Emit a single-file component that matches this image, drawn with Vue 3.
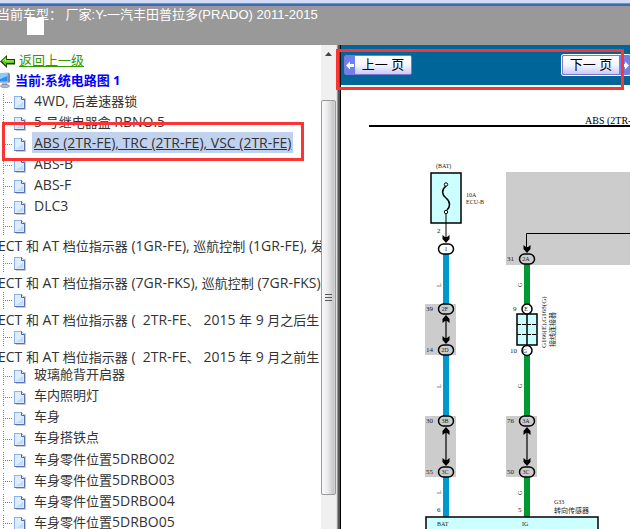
<script setup>
const entries = [
  { text: '4WD, 后差速器锁' },
  { text: '5 号继电器盒 RBNO.5' },
  { text: 'ABS (2TR-FE), TRC (2TR-FE), VSC (2TR-FE)', active: true },
  { text: 'ABS-B' },
  { text: 'ABS-F' },
  { text: 'DLC3' },
  { text: 'ECT 和 AT 档位指示器 (1GR-FE), 巡航控制 (1GR-FE), 发', long: true },
  { text: 'ECT 和 AT 档位指示器 (7GR-FKS), 巡航控制 (7GR-FKS)', long: true },
  { text: 'ECT 和 AT 档位指示器 (\u00a0 2TR-FE、 2015 年 9 月之后生', long: true },
  { text: 'ECT 和 AT 档位指示器 (\u00a0 2TR-FE、 2015 年 9 月之前生', long: true },
  { text: '玻璃舱背开启器' },
  { text: '车内照明灯' },
  { text: '车身' },
  { text: '车身搭铁点' },
  { text: '车身零件位置5DRBO02' },
  { text: '车身零件位置5DRBO03' },
  { text: '车身零件位置5DRBO04' },
  { text: '车身零件位置5DRBO05' }
]

// Latin runs are set one size larger than the Chinese around them
const han = /[\u3001\u4e00-\u9fff]/
const items = entries.map((entry) => ({
  ...entry,
  runs: entry.text
    .split(/([\u3001\u4e00-\u9fff]+)/)
    .filter(Boolean)
    .map((text) => ({ text, latin: !han.test(text) }))
}))

const wires = [
  { x: 443, y: 254, h: 52, color: '#0099cc' },
  { x: 443, y: 354, h: 63, color: '#0099cc' },
  { x: 443, y: 476, h: 41, color: '#0099cc' },
  { x: 524, y: 264, h: 41, color: '#009933' },
  { x: 524, y: 355, h: 62, color: '#009933' },
  { x: 524, y: 476, h: 41, color: '#009933' }
]

const shades = [
  { x: 425, y: 304, w: 31, h: 51 },
  { x: 425, y: 416, w: 31, h: 61 },
  { x: 506, y: 416, w: 31, h: 61 },
  { x: 506, y: 172, w: 200, h: 93 }
]

const terminals = [
  { x: 446, y: 249, name: '1', pin: '', fill: '#fff' },
  { x: 446, y: 309, name: '2F', pin: '39', fill: '#ccc' },
  { x: 446, y: 350, name: '2D', pin: '14', fill: '#ccc' },
  { x: 446, y: 421, name: '3B', pin: '30', fill: '#ccc' },
  { x: 446, y: 472, name: '3C', pin: '55', fill: '#ccc' },
  { x: 527, y: 259, name: '2A', pin: '31', fill: '#ccc' },
  { x: 527, y: 421, name: '3A', pin: '76', fill: '#ccc' },
  { x: 527, y: 472, name: '3C', pin: '50', fill: '#ccc' }
]

const downArrows = [
  { x: 446, y: 243 },
  { x: 527, y: 253 },
  { x: 446, y: 344 },
  { x: 446, y: 466 },
  { x: 527, y: 466 }
]

const upArrows = [
  { x: 446, y: 315 },
  { x: 446, y: 427 },
  { x: 527, y: 427 }
]

const wireLabels = [
  { x: 441, y: 287, name: 'L' },
  { x: 441, y: 388, name: 'L' },
  { x: 441, y: 494, name: 'L' },
  { x: 522, y: 287, name: 'G' },
  { x: 522, y: 388, name: 'G' },
  { x: 522, y: 495, name: 'G' }
]
</script>

<template>
  <div class="page">
    <header class="top">
      <p class="model">当前车型： 厂家:Y-一汽丰田普拉多(PRADO) 2011-2015</p>
      <span class="patch"></span>
    </header>

    <div class="body">
      <aside class="side">
        <nav class="tree">
          <a class="back" href="#">
            <svg width="15" height="13" viewBox="0 0 15 13" aria-hidden="true">
              <path d="M0 6.500L7 0V4H15V9.500H7V13Z" fill="#173f05" />
              <path d="M1.500 6L6.200 1.700V5H14V8H6.200V10.800Z" fill="#58c81b" />
              <path d="M3 6L5.500 3.800V6H13.500" fill="none" stroke="#b9ee67" stroke-width="1" />
            </svg>
            <span>返回上一级</span>
          </a>
          <div class="current">
            <svg width="11" height="16" viewBox="0 0 11 16" aria-hidden="true">
              <path d="M-2 1L8 .5L10 2V10L7 11.500L-2 11Z" fill="#b4bed6" />
              <path d="M8 .5L10 2V10L8 11Z" fill="#7f8cb0" />
              <path d="M-2 2H7.500V9.500H-2Z" fill="#2f8fe6" />
              <path d="M-2 2H7.500V4L-2 8Z" fill="#86cbfa" />
              <path d="M2 11.500H7V13H2Z" fill="#8088b4" />
              <ellipse cx="5" cy="14" rx="4.500" ry="1.700" fill="#b3b6d2" stroke="#7c80a8" stroke-width=".6" />
            </svg>
            <span>当前:系统电路图 1</span>
          </div>
          <ul class="list">
            <li v-for="(item, i) in items" :key="i" :class="['node', { long: item.long, active: item.active }]">
              <svg class="branch" width="28" height="18" viewBox="0 0 28 18" aria-hidden="true">
                <path d="M3.500 0V18M5 8.500H13" fill="none" stroke="#808080" stroke-dasharray="1 1" />
                <path d="M16 4H26V16H16Z" fill="#a9a9b5" opacity=".6" />
                <path d="M14.500 2.500H21.500L24.500 5.500V14.500H14.500Z" fill="#dcedff" stroke="#5c6fae" />
                <path d="M14.500 14V2.500H21" fill="none" stroke="#8fb2e8" />
                <path d="M21.500 2.500V5.500H24.500" fill="#fff" stroke="#5365a0" />
                <path d="M16 13L23 8V13Z" fill="#bddcff" />
              </svg>
              <a class="label" href="#"><span v-for="(run, r) in item.runs" :key="r" :class="{ latin: run.latin }">{{ run.text }}</span></a>
            </li>
          </ul>
        </nav>
        <div class="scroll" aria-hidden="true">
          <div class="up"><svg width="7" height="4" viewBox="0 0 7 4"><path d="M3.500 0L7 4H0Z" fill="#444" /></svg></div>
          <div class="thumb"><i></i><i></i><i></i></div>
        </div>
        <div class="divider"></div>
        <span class="mark mark-item"></span>
      </aside>

      <main class="view">
        <div class="bar">
          <button class="pager prev" type="button">
            <span class="tip"><svg width="9" height="9" viewBox="0 0 9 9" aria-hidden="true"><path d="M0 4.500L4 .5V3H8V6H4V8.500Z" fill="#fff" /></svg></span>
            <span class="word">上一 页</span>
          </button>
          <button class="pager next" type="button">
            <span class="word">下一 页</span>
            <span class="tip"><svg width="9" height="9" viewBox="0 0 9 9" aria-hidden="true"><path d="M9 4.500L5 .5V3H1V6H5V8.500Z" fill="#fff" /></svg></span>
          </button>
        </div>
        <span class="mark mark-pager"></span>

        <svg class="diagram" width="289" height="444" viewBox="341 85 289 444" role="img" aria-label="ABS (2TR-FE)">
          <rect v-for="(s, i) in shades" :key="'s' + i" :x="s.x" :y="s.y" :width="s.w" :height="s.h" fill="#ccc" />
          <rect v-for="(w, i) in wires" :key="'w' + i" :x="w.x" :y="w.y" width="6" :height="w.h" :fill="w.color" />

          <text class="title" x="585" y="124">ABS (2TR-FE)</text>
          <path d="M369 126H640" stroke="#000" stroke-width="2" />

          <text x="436" y="168">(BAT)</text>
          <rect x="431" y="173" width="30" height="50" fill="#cff" stroke="#000" stroke-width="1.500" />
          <path d="M446 186C441 190 442 195 446 198C451 202 450 207 447 210" fill="none" stroke="#000" stroke-width="1.500" />
          <path d="M446 213V238" stroke="#000" />
          <circle cx="446" cy="184.500" r="1.700" fill="#fff" stroke="#000" />
          <circle cx="446" cy="212" r="1.700" fill="#fff" stroke="#000" />
          <text x="466" y="197">10A</text>
          <text x="466" y="204">ECU-B</text>
          <text class="pin" x="437" y="233">2</text>

          <path d="M640 233.500H526.500V248" fill="none" stroke="#000" />
          <path d="M446 320V340M446 432V462M527 432V462" stroke="#000" stroke-width="1.200" />
          <path v-for="(a, i) in downArrows" :key="'d' + i" :transform="`translate(${a.x} ${a.y})`" d="M0 0L-3.500 -4V-8L-1 -6H1L3.500 -8V-4Z" />
          <path v-for="(a, i) in upArrows" :key="'u' + i" :transform="`translate(${a.x} ${a.y})`" d="M0 0L-3.500 4V8L-1 6H1L3.500 8V4Z" />

          <g v-for="(t, i) in terminals" :key="'t' + i">
            <rect :x="t.x - 7.500" :y="t.y - 5" width="15" height="10" rx="5" :fill="t.fill" stroke="#000" stroke-width="1.500" />
            <text class="mid" :x="t.x - (t.name === '1' ? 0 : 1)" :y="t.y + 2">{{ t.name }}</text>
            <text v-if="t.pin" class="pin" :x="t.x - 20" :y="t.y + 2">{{ t.pin }}</text>
          </g>

          <rect x="517" y="314" width="20" height="31" fill="#cff" stroke="#000" stroke-width="1.500" />
          <path d="M527 314V345" stroke="#000" stroke-width="1.500" />
          <path d="M517 324.500H537M517 334.500H537" stroke="#000" stroke-dasharray="4 1" />
          <circle cx="527" cy="309" r="5" fill="#fff" stroke="#000" stroke-width="1.500" />
          <circle cx="527" cy="350.500" r="5" fill="#fff" stroke="#000" stroke-width="1.500" />
          <text class="mid" x="526" y="311">E</text>
          <text class="mid" x="525" y="353">G</text>
          <text class="pin" x="513" y="311">9</text>
          <text class="pin" x="510" y="353">10</text>
          <text class="pin" transform="translate(546 348) rotate(-90)">G166(E),G168(G)</text>
          <text class="pin" transform="translate(555 347) rotate(-90)">接线连接器</text>
          <text v-for="(l, i) in wireLabels" :key="'l' + i" :transform="`translate(${l.x} ${l.y}) rotate(-90)`">{{ l.name }}</text>

          <text class="pin" x="437" y="512">6</text>
          <text class="pin" x="518" y="512">5</text>
          <text x="554" y="504">G33</text>
          <text class="pin" x="554" y="513">转向传感器</text>
          <rect x="426" y="517" width="172" height="30" fill="#cff" stroke="#000" stroke-width="1.500" />
          <text x="437" y="526">BAT</text>
          <text x="522" y="526">IG</text>
        </svg>
      </main>
    </div>
  </div>
</template>

<style>
body {
  margin: 0;
  overflow: hidden;
}
</style>

<style scoped>
.page {
  height: 100vh;
  display: flex;
  flex-direction: column;
  overflow: hidden;
  background: #fff;
  color: #333;
  font: 13px/19px "Open Sans", "Noto Sans CJK SC", sans-serif;
}
.top {
  position: relative;
  flex: none;
  box-sizing: border-box;
  height: 45px;
  padding-top: 6px;
  background: linear-gradient(#d3def5 0 3px, #6d90d8 3px 4px, #3c68c0 4px 6px, #999 6px);
}
.model {
  margin: 0 0 0 -3px;
  color: #fff;
  font: 13px/17px "Liberation Sans", "Noto Sans CJK SC", sans-serif;
  white-space: nowrap;
}
.patch {
  position: absolute;
  left: 27px;
  top: 18px;
  width: 17px;
  height: 17px;
  background: #fff;
}
.body {
  flex: 1;
  min-height: 0;
  display: flex;
}
.side {
  position: relative;
  flex: none;
  display: flex;
  width: 341px;
}
.tree {
  flex: 1;
  min-width: 0;
  overflow: hidden;
  padding-top: 5px;
}
.back,
.current {
  display: flex;
  align-items: center;
  gap: 4px;
  height: 20px;
}
.back {
  color: #390;
}
.back svg {
  margin-top: 2px;
}
.current {
  color: #00f;
  font-weight: bold;
}
.list {
  margin: 0;
  padding: 0;
  list-style: none;
}
.node {
  display: flex;
  height: 21px;
  white-space: nowrap;
}
.branch {
  flex: none;
  margin-top: 4px;
}
.label {
  height: 21px;
  padding: 0 2px;
  margin-left: 4px;
  line-height: 21px;
  color: #333;
  text-decoration: none;
}
.latin {
  font-size: 14px;
}
.active .label {
  background: #c1d2ee;
  text-decoration: underline;
}
.long {
  flex-direction: column;
  height: 37px;
}
.long .branch {
  margin-top: 2px;
}
.long .label {
  margin-left: -4px;
  height: 17px;
  line-height: 19px;
}
.scroll {
  flex: none;
  width: 15px;
  display: flex;
  flex-direction: column;
  padding-bottom: 34px;
  background: #f0f0f0;
}
.up {
  display: flex;
  justify-content: center;
  height: 55px;
}
.up svg {
  margin-top: 7px;
}
.thumb {
  flex: 1;
  display: flex;
  flex-direction: column;
  align-items: center;
  justify-content: center;
  gap: 2px;
  border: 1px solid #999;
  border-radius: 2px;
  background: linear-gradient(90deg, #fafafa, #e9e9eb 45%, #c6c6ca 90%, #ddd);
}
.thumb i {
  width: 7px;
  height: 1px;
  background: #555;
}
.divider {
  flex: none;
  width: 5px;
  background: linear-gradient(90deg, #e0e0e0 0 20%, #999 20% 40%, #555 40% 80%, #000 80%);
}
.mark {
  position: absolute;
  box-sizing: border-box;
  border: 3px solid #fb3434;
  pointer-events: none;
}
.mark-item {
  left: 2px;
  top: 77px;
  width: 302px;
  height: 39px;
}
.view {
  position: relative;
  flex: 1;
  min-width: 0;
}
.mark-pager {
  left: -5px;
  top: 4px;
  width: 288px;
  height: 41px;
}
.bar {
  display: flex;
  align-items: center;
  gap: 150px;
  box-sizing: border-box;
  height: 40px;
  padding-left: 3px;
  overflow: hidden;
  background: #069;
}
.pager {
  flex: none;
  display: flex;
  align-items: stretch;
  box-sizing: border-box;
  width: 68px;
  height: 20px;
  padding: 0;
  border: 1px solid #8078d0;
  border-radius: 2px;
  background: linear-gradient(#fff, #f4f4ff 50%, #c8ccfa);
  color: #000;
  font: 13px/17px "Liberation Sans", "Noto Sans CJK SC", sans-serif;
}
.next {
  box-shadow: 0 0 0 1px #fff;
}
.tip {
  flex: none;
  display: flex;
  align-items: center;
  justify-content: center;
  width: 10px;
  background: #6f80ec;
}
.word {
  flex: 1;
  text-align: center;
  white-space: nowrap;
}
.diagram {
  display: block;
}
.diagram text {
  fill: #222;
  font: 6px "Liberation Serif", "Noto Sans CJK SC", serif;
}
.diagram .title {
  fill: #000;
  font-size: 10px;
}
.diagram .mid {
  text-anchor: middle;
}
.diagram .pin {
  font-size: 7px;
}
</style>
